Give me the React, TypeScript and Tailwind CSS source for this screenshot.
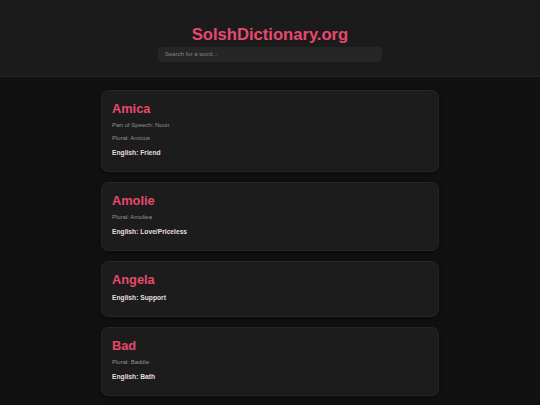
type Entry = {
  word: string;
  pos?: string;
  plural?: string;
  english: string;
};

const ENTRIES: Entry[] = [
  { word: "Amica", pos: "Noun", plural: "Amicus", english: "Friend" },
  { word: "Amolie", plural: "Amoliea", english: "Love/Priceless" },
  { word: "Angela", english: "Support" },
  { word: "Bad", plural: "Baddie", english: "Bath" },
];

function EntryCard({ entry }: { entry: Entry }) {
  return (
    <div className="rounded-[7px] border border-[#262626] bg-[#1c1c1d] px-[10px] pt-[10px] pb-[15px] shadow-[0_1px_4px_rgba(0,0,0,0.5)]">
      <h2 className="text-[12.8px] leading-[15px] font-bold text-[#e8496c]">{entry.word}</h2>
      {entry.pos && (
        <p className="mt-[6px] text-[6px] leading-[7px] text-[#929292]">
          Part of Speech: {entry.pos}
        </p>
      )}
      {entry.plural && (
        <p className="mt-[6px] text-[6px] leading-[7px] text-[#929292]">
          Plural: {entry.plural}
        </p>
      )}
      <p className="mt-[7px] text-[6.7px] leading-[7px] font-bold text-[#e6dde0]">
        English: {entry.english}
      </p>
    </div>
  );
}

export default function App() {
  return (
    <div className="h-screen overflow-hidden bg-[#111112] font-['Liberation_Sans',Arial,sans-serif]">
      <header className="h-[77px] border-b border-[#262627] bg-[#1b1b1c] pt-[26px]">
        <h1 className="text-center text-[16.6px] leading-[18px] font-bold text-[#e8496c]">
          SolshDictionary.org
        </h1>
        <div className="mx-auto mt-[3px] flex h-[15px] w-[224px] items-center rounded-[4px] bg-[#262627] px-[7px]">
          <span className="text-[6px] text-[#858585]">Search for a word...</span>
        </div>
      </header>
      <main className="mx-auto flex w-[338px] flex-col gap-[10px] pt-[13px]">
        {ENTRIES.map((e) => (
          <EntryCard key={e.word} entry={e} />
        ))}
      </main>
    </div>
  );
}
